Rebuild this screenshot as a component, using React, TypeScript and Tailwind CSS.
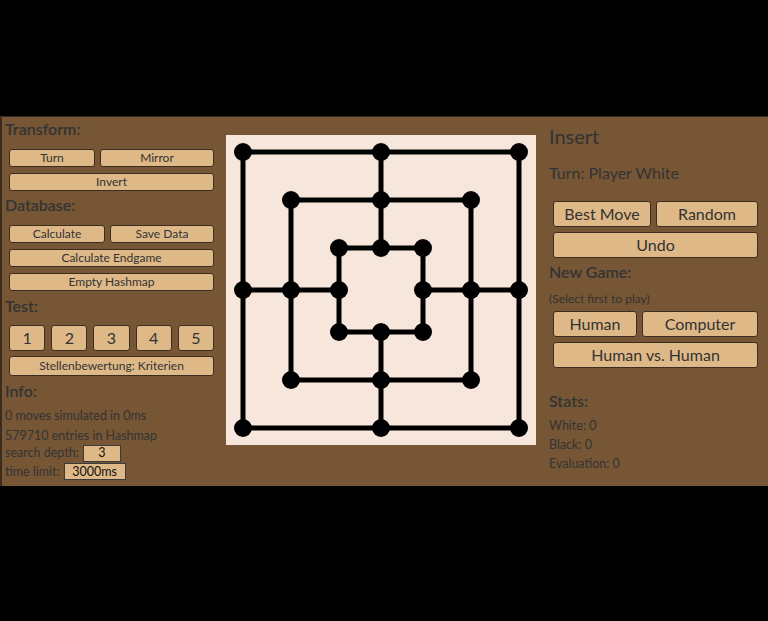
const font = { fontFamily: 'Lato, "Open Sans", sans-serif' }

function SmallButton({ label, className = '' }: { label: string; className?: string }) {
  return (
    <button className={`h-[18px] rounded-[3px] border border-[#3b2d1f] bg-[#deb887] text-[12px] leading-none text-[#333] ${className}`}>
      {label}
    </button>
  )
}

function BigButton({ label, className = '' }: { label: string; className?: string }) {
  return (
    <button className={`h-[26px] rounded-[3px] border border-[#3b2d1f] bg-[#deb887] text-[16px] leading-none text-[#333] ${className}`}>
      {label}
    </button>
  )
}

function Board() {
  const squares = [17, 65, 113]
  const lines: [number, number, number, number][] = []
  const points: [number, number][] = []
  for (const o of squares) {
    const a = o
    const b = 310 - o
    lines.push([a, a, b, a], [b, a, b, b], [b, b, a, b], [a, b, a, a])
    const m = 155
    points.push([a, a], [m, a], [b, a], [b, m], [b, b], [m, b], [a, b], [a, m])
  }
  lines.push([155, 17, 155, 113], [155, 197, 155, 293], [17, 155, 113, 155], [197, 155, 293, 155])

  return (
    <svg width="310" height="310" viewBox="0 0 310 310" className="block bg-[#f7e6dc]">
      {lines.map(([x1, y1, x2, y2], i) => (
        <line key={i} x1={x1} y1={y1} x2={x2} y2={y2} stroke="#000" strokeWidth="5" strokeLinecap="square" />
      ))}
      {points.map(([cx, cy], i) => (
        <circle key={i} cx={cx} cy={cy} r="9" fill="#000" />
      ))}
    </svg>
  )
}

export default function App() {
  return (
    <div className="h-[621px] w-[768px] bg-black pt-[116px]" style={font}>
      <div className="flex h-[370px] border-l-2 border-t border-[#3a2c1e] bg-[#765635] text-[#333]">
        {/* left column */}
        <div className="flex w-[224px] flex-col pl-[3px] pr-[12px]">
          <h2 className="mt-[2px] h-[20px] text-[16px] font-semibold leading-[20px]">Transform:</h2>
          <div className="mt-[10px] ml-[4px] flex gap-[5px]">
            <SmallButton label="Turn" className="w-[86px]" />
            <SmallButton label="Mirror" className="flex-1" />
          </div>
          <SmallButton label="Invert" className="mt-[6px] ml-[4px]" />
          <h2 className="mt-[4px] h-[20px] text-[16px] font-semibold leading-[20px]">Database:</h2>
          <div className="mt-[10px] ml-[4px] flex gap-[5px]">
            <SmallButton label="Calculate" className="w-[96px]" />
            <SmallButton label="Save Data" className="flex-1" />
          </div>
          <SmallButton label="Calculate Endgame" className="mt-[6px] ml-[4px]" />
          <SmallButton label="Empty Hashmap" className="mt-[6px] ml-[4px]" />
          <h2 className="mt-[5px] h-[20px] text-[16px] font-semibold leading-[20px]">Test:</h2>
          <div className="mt-[9px] ml-[4px] flex gap-[6px]">
            {['1', '2', '3', '4', '5'].map((n) => (
              <BigButton key={n} label={n} className="flex-1" />
            ))}
          </div>
          <button className="mt-[5px] ml-[4px] h-[20px] rounded-[3px] border border-[#3b2d1f] bg-[#deb887] text-[12px] leading-none text-[#333]">
            Stellenbewertung: Kriterien
          </button>
          <h2 className="mt-[5px] h-[20px] text-[16px] font-semibold leading-[20px]">Info:</h2>
          <div className="mt-[5px] text-[12.5px] leading-[20px]">
            <p>0 moves simulated in 0ms</p>
            <p>579710 entries in Hashmap</p>
            <div className="-mt-[2px] flex h-[18px] items-center gap-[4px]">
              <span>search depth:</span>
              <span className="flex h-[17px] w-[38px] items-center justify-center border border-[#3b3b3b] bg-[#deb887] text-[#111]">3</span>
            </div>
            <div className="mt-[1px] flex h-[17px] items-center gap-[4px]">
              <span>time limit:</span>
              <span className="flex h-[17px] w-[62px] items-center justify-center border border-[#3b3b3b] bg-[#deb887] text-[#111]">3000ms</span>
            </div>
          </div>
        </div>

        {/* board */}
        <div className="pt-[18px]">
          <Board />
        </div>

        {/* right column */}
        <div className="flex flex-1 flex-col pl-[13px] pr-[10px]">
          <h1 className="mt-[6px] h-[26px] text-[20px] leading-[26px]">Insert</h1>
          <p className="mt-[13px] h-[22px] text-[16px] leading-[22px]">Turn: Player White</p>
          <div className="mt-[17px] flex gap-[5px] pl-[4px]">
            <BigButton label="Best Move" className="w-[98px]" />
            <BigButton label="Random" className="flex-1" />
          </div>
          <div className="pl-[4px]">
            <BigButton label="Undo" className="mt-[5px] w-full" />
          </div>
          <h2 className="mt-[4px] h-[20px] text-[16px] font-semibold leading-[20px]">New Game:</h2>
          <p className="mt-[9px] h-[16px] text-[12px] leading-[16px]">(Select first to play)</p>
          <div className="mt-[4px] flex gap-[5px] pl-[4px]">
            <BigButton label="Human" className="w-[84px]" />
            <BigButton label="Computer" className="flex-1" />
          </div>
          <div className="pl-[4px]">
            <BigButton label="Human vs. Human" className="mt-[5px] w-full" />
          </div>
          <h2 className="mt-[23px] h-[20px] text-[16px] font-semibold leading-[20px]">Stats:</h2>
          <div className="mt-[5px] text-[12.5px] leading-[19px]">
            <p>White: 0</p>
            <p>Black: 0</p>
            <p>Evaluation: 0</p>
          </div>
        </div>
      </div>
    </div>
  )
}
